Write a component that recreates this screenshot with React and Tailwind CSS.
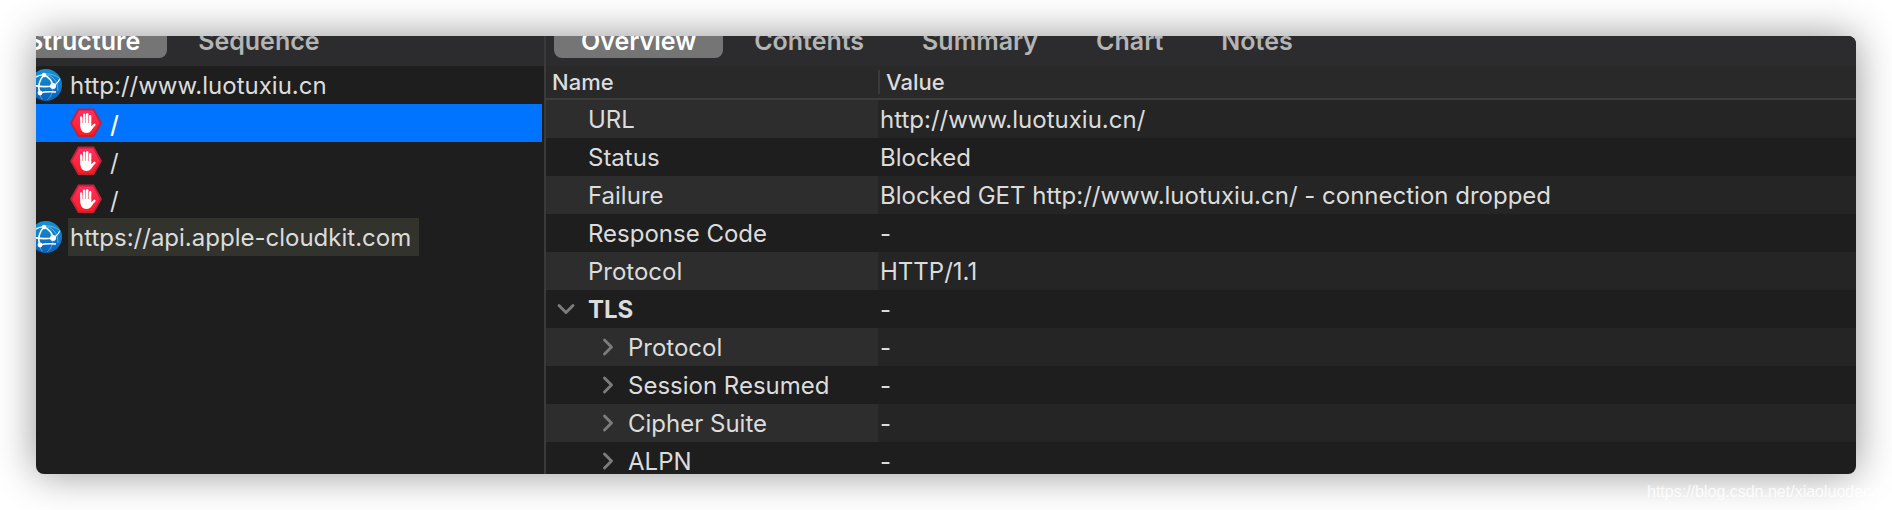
import React, { useState } from 'react';
import { ChevronDown, ChevronRight } from 'lucide-react';

const viewTabs = ['Structure', 'Sequence'];
const detailTabs = ['Overview', 'Contents', 'Summary', 'Chart', 'Notes'];

const hosts = [
  { url: 'http://www.luotuxiu.cn', requests: ['/', '/', '/'] },
  { url: 'https://api.apple-cloudkit.com', requests: [], focused: true },
];

const details = [
  { name: 'URL', value: 'http://www.luotuxiu.cn/' },
  { name: 'Status', value: 'Blocked' },
  { name: 'Failure', value: 'Blocked GET http://www.luotuxiu.cn/ - connection dropped' },
  { name: 'Response Code', value: '-' },
  { name: 'Protocol', value: 'HTTP/1.1' },
  { name: 'TLS', value: '-', group: true },
  { name: 'Protocol', value: '-', nested: true },
  { name: 'Session Resumed', value: '-', nested: true },
  { name: 'Cipher Suite', value: '-', nested: true },
  { name: 'ALPN', value: '-', nested: true },
];

const GlobeIcon = () => (
  <svg viewBox="0 0 32 32" className="w-8 h-8 shrink-0" aria-hidden="true">
    <defs>
      <linearGradient id="globe" x1="0" y1="0" x2="0" y2="1">
        <stop offset="0" stopColor="#1593d3" />
        <stop offset="1" stopColor="#0a62bc" />
      </linearGradient>
      <clipPath id="globe-clip">
        <circle cx="16" cy="16" r="15" />
      </clipPath>
    </defs>
    <circle cx="16" cy="16" r="16" fill="url(#globe)" />
    <g clipPath="url(#globe-clip)" fill="none" stroke="#fff">
      <g strokeWidth="0.9" opacity="0.4">
        <path d="M3 9C10 4 22 3 29 9" />
        <path d="M14 6C22 5 28 12 28 22" />
        <path d="M10 24C10 28 12 30 14 32" />
        <path d="M23 17C23 23 21 28 17 31" />
      </g>
      <g strokeWidth="1.6">
        <path d="M14 6C10 10 7 17 10 24" />
        <path d="M14 6C19 8 22 12 23 17" />
        <path d="M2 16C9 18 16 18 23 17" />
        <path d="M10 24C15 22.5 20 22.5 26 23" />
      </g>
      <g strokeWidth="1.1">
        <path d="M23 17C27 15 29 12 30 9" />
        <path d="M3 11C6 7 10 6 14 6" />
      </g>
    </g>
    <g fill="#fff">
      <circle cx="14" cy="6" r="2.2" />
      <circle cx="23" cy="17" r="3" />
      <circle cx="10" cy="24" r="2.4" />
    </g>
  </svg>
);

const BlockedIcon = () => (
  <svg viewBox="0 0 32 32" className="w-8 h-8 shrink-0" aria-hidden="true">
    <defs>
      <linearGradient id="blocked" x1="0" y1="0" x2="0" y2="1">
        <stop offset="0" stopColor="#ff2f63" />
        <stop offset="1" stopColor="#fb1d1f" />
      </linearGradient>
    </defs>
    <path d="M8 1.5H24L32 16L24 30H8L0 16Z" fill="#c3203a" />
    <path d="M9 3.5H23L29.8 16L23 28H9L2.2 16Z" fill="url(#blocked)" />
    <g stroke="#fff" strokeWidth="2.4" strokeLinecap="round" fill="none">
      <path d="M11.2 10.5L11.6 19" />
      <path d="M14.2 7.8L14.4 18" />
      <path d="M17.2 7.2V18" />
      <path d="M20.2 9.2L20 18" />
      <path d="M20.5 21.5L24.4 17.8" />
    </g>
    <path d="M10.4 16H21.2V19.5L24 19C22 23 20.5 26 16.5 26C12.5 26 10.4 23 10.4 19Z" fill="#fff" />
  </svg>
);

const TabBar = ({ tabs, active, onSelect, className }) => (
  <div className={`h-[30px] shrink-0 flex items-end gap-1 pb-2 bg-[#2c2c2e] ${className}`}>
    {tabs.map((tab) => (
      <button
        key={tab}
        onClick={() => onSelect(tab)}
        className={`h-8 pb-0.5 px-[27px] shrink-0 rounded-b-lg text-[25px] font-semibold leading-[30px] ${
          active === tab ? 'bg-[#757575] text-white' : 'text-[#b5b5b6]'
        }`}
      >
        {tab}
      </button>
    ))}
  </div>
);

const App = () => {
  const [view, setView] = useState('Structure');
  const [detail, setDetail] = useState('Overview');
  const [selected, setSelected] = useState('0-0');

  return (
    <div className="relative h-screen p-9 bg-white overflow-hidden font-['Inter',sans-serif] text-2xl text-[#dcdcdc]">
      <div className="h-full flex rounded-lg rounded-tl-none overflow-hidden bg-[#1e1e1e] shadow-[0_0_40px_rgba(0,0,0,0.42)]">
        {/* Request tree */}
        <aside className="w-[510px] shrink-0 flex flex-col overflow-hidden border-r-2 border-[#3a3a3b]">
          <TabBar tabs={viewTabs} active={view} onSelect={setView} className="-ml-9" />
          {hosts.map((host, i) => (
            <div key={host.url} className="-ml-1.5 mr-0.5">
              <div className="h-[38px] flex items-center gap-1.5">
                <GlobeIcon />
                <span className={`h-full pl-0.5 pr-2 leading-10 ${host.focused ? 'bg-[#32332c]' : ''}`}>
                  {host.url}
                </span>
              </div>
              {host.requests.map((path, j) => (
                <button
                  key={j}
                  onClick={() => setSelected(`${i}-${j}`)}
                  className={`w-full h-[38px] pl-10 flex items-center gap-2 text-left ${
                    selected === `${i}-${j}` ? 'bg-[#0073ff] text-white font-medium' : ''
                  }`}
                >
                  <BlockedIcon />
                  <span className="pt-1">{path}</span>
                </button>
              ))}
            </div>
          ))}
        </aside>

        {/* Request details */}
        <main className="flex-1 min-w-0 flex flex-col overflow-hidden">
          <TabBar tabs={detailTabs} active={detail} onSelect={setDetail} className="pl-2" />
          <table className="w-full table-fixed border-separate border-spacing-0 text-left">
            <thead>
              <tr className="h-[34px] bg-[#292929] text-[22px]">
                <th className="w-[332px] p-0 font-medium border-b-2 border-[#3d3d3e]">
                  <div className="pl-1.5 h-6 leading-6">Name</div>
                </th>
                <th className="p-0 font-medium border-b-2 border-[#3d3d3e]">
                  <div className="pl-1.5 h-6 leading-6 border-l-2 border-[#3a3a3b]">Value</div>
                </th>
              </tr>
            </thead>
            <tbody>
              {details.map((row, i) => (
                <tr key={i} className="h-[38px] odd:bg-[#252525] leading-9">
                  <td className={`p-0 ${i % 2 === 0 ? 'bg-[#2d2d2d]' : ''}`}>
                    <div className={`flex items-center ${row.nested ? 'pl-[50px]' : 'pl-2.5'}`}>
                      <span className="w-8 shrink-0 text-[#7c7c7c]">
                        {row.group && <ChevronDown className="w-7 h-7 -ml-1" strokeWidth={2.5} />}
                        {row.nested && <ChevronRight className="w-7 h-7 -ml-0.5" strokeWidth={2.5} />}
                      </span>
                      <span className={`pt-0.5 ${row.group ? 'font-bold' : ''}`}>{row.name}</span>
                    </div>
                  </td>
                  <td className="p-0 pl-0.5 pt-0.5 truncate">{row.value}</td>
                </tr>
              ))}
            </tbody>
          </table>
        </main>
      </div>
      <p className="absolute right-0 bottom-2 w-[245px] overflow-hidden whitespace-nowrap font-['Liberation_Sans',sans-serif] text-base leading-5 text-white/80">
        https://blog.csdn.net/xiaoluodecai
      </p>
    </div>
  );
};

export default App;
